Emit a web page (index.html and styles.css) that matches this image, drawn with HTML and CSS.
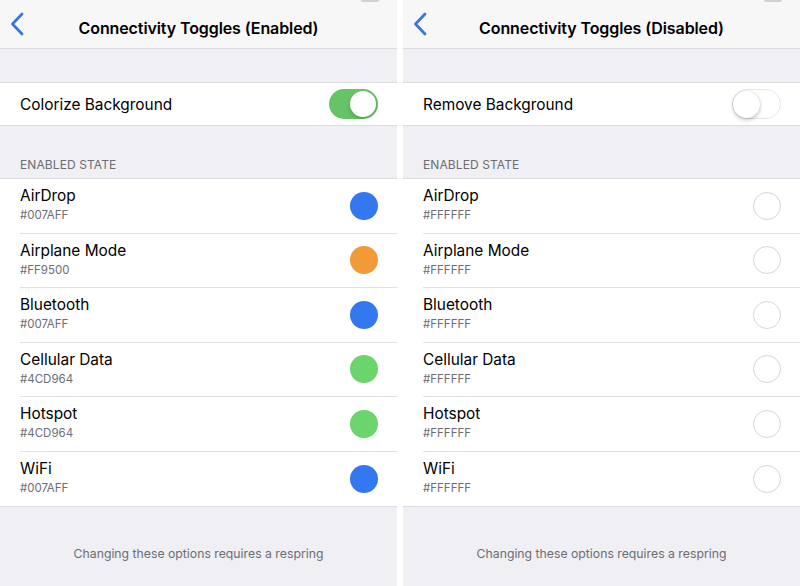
FILE: index.html
```html
<!DOCTYPE html>
<html>
<head>
<meta charset="utf-8">
<link rel="stylesheet" href="styles.css">
</head>
<body>
<div class="phone">
  <div class="nav">
    <svg class="back" width="14" height="24" viewBox="0 0 14 24"><path d="M12 2 L2.5 12 L12 22" fill="none" stroke="#3a7ad6" stroke-width="2.8" stroke-linecap="round" stroke-linejoin="round"/></svg>
    <div class="title">Connectivity Toggles (Enabled)</div>
    <div class="status-mark"></div>
  </div>
  <div class="spacer"></div>
  <div class="switch-row">
    <span class="label">Colorize Background</span>
    <span class="switch on"><span class="knob"></span></span>
  </div>
  <div class="section-head">ENABLED STATE</div>
  <div class="list">
    <div class="row"><div class="text"><div class="name">AirDrop</div><div class="hex">#007AFF</div></div><span class="dot blue"></span></div>
    <div class="row"><div class="text"><div class="name">Airplane Mode</div><div class="hex">#FF9500</div></div><span class="dot orange"></span></div>
    <div class="row"><div class="text"><div class="name">Bluetooth</div><div class="hex">#007AFF</div></div><span class="dot blue"></span></div>
    <div class="row"><div class="text"><div class="name">Cellular Data</div><div class="hex">#4CD964</div></div><span class="dot green"></span></div>
    <div class="row"><div class="text"><div class="name">Hotspot</div><div class="hex">#4CD964</div></div><span class="dot green"></span></div>
    <div class="row"><div class="text"><div class="name">WiFi</div><div class="hex">#007AFF</div></div><span class="dot blue"></span></div>
  </div>
  <div class="footer">Changing these options requires a respring</div>
</div>
<div class="phone">
  <div class="nav">
    <svg class="back" width="14" height="24" viewBox="0 0 14 24"><path d="M12 2 L2.5 12 L12 22" fill="none" stroke="#3a7ad6" stroke-width="2.8" stroke-linecap="round" stroke-linejoin="round"/></svg>
    <div class="title">Connectivity Toggles (Disabled)</div>
    <div class="status-mark"></div>
  </div>
  <div class="spacer"></div>
  <div class="switch-row">
    <span class="label">Remove Background</span>
    <span class="switch off"><span class="knob"></span></span>
  </div>
  <div class="section-head">ENABLED STATE</div>
  <div class="list">
    <div class="row"><div class="text"><div class="name">AirDrop</div><div class="hex">#FFFFFF</div></div><span class="dot white"></span></div>
    <div class="row"><div class="text"><div class="name">Airplane Mode</div><div class="hex">#FFFFFF</div></div><span class="dot white"></span></div>
    <div class="row"><div class="text"><div class="name">Bluetooth</div><div class="hex">#FFFFFF</div></div><span class="dot white"></span></div>
    <div class="row"><div class="text"><div class="name">Cellular Data</div><div class="hex">#FFFFFF</div></div><span class="dot white"></span></div>
    <div class="row"><div class="text"><div class="name">Hotspot</div><div class="hex">#FFFFFF</div></div><span class="dot white"></span></div>
    <div class="row"><div class="text"><div class="name">WiFi</div><div class="hex">#FFFFFF</div></div><span class="dot white"></span></div>
  </div>
  <div class="footer">Changing these options requires a respring</div>
</div>
</body>
</html>
```
FILE: styles.css
```css
html, body {
  margin: 0;
  padding: 0;
  background: #ffffff;
}
body {
  display: flex;
  gap: 6px;
  width: 800px;
  height: 586px;
  overflow: hidden;
  font-family: "Inter", "Liberation Sans", sans-serif;
  color: #000;
}
.phone {
  width: 397px;
  height: 586px;
  background: #efeff4;
  display: flex;
  flex-direction: column;
}
.nav {
  height: 48px;
  background: #f7f7f8;
  border-bottom: 1px solid #dcdce0;
  display: grid;
  grid-template-columns: 40px 1fr 40px;
  align-items: center;
  position: relative;
}
.back {
  margin-left: 10px;
}
.title {
  text-align: center;
  font-size: 16px;
  font-weight: 600;
  letter-spacing: -0.1px;
  padding-top: 8px;
}
.status-mark {
  position: absolute;
  top: 0;
  right: 18px;
  width: 18px;
  height: 2px;
  background: #d0d0d4;
  border-radius: 0 0 2px 2px;
}
.spacer {
  height: 33px;
}
.switch-row {
  height: 42px;
  background: #fff;
  border-top: 1px solid #dcdce0;
  border-bottom: 1px solid #dcdce0;
  display: flex;
  align-items: center;
  justify-content: space-between;
  padding: 0 19px 0 20px;
}
.label {
  font-size: 15.4px;
}
.switch {
  width: 49px;
  height: 30px;
  border-radius: 15px;
  display: flex;
  align-items: center;
  box-sizing: border-box;
  padding: 2px;
}
.switch.on {
  background: #65c466;
  justify-content: flex-end;
}
.switch.off {
  background: #fff;
  border: 1.5px solid #e4e4e8;
  justify-content: flex-start;
  padding: 0;
}
.knob {
  width: 26px;
  height: 26px;
  border-radius: 50%;
  background: #fff;
  box-shadow: 0 2px 4px rgba(0,0,0,0.2);
}
.switch.off .knob {
  width: 27px;
  height: 27px;
  box-shadow: 0 2px 4px rgba(0,0,0,0.22), 0 0 0 0.5px rgba(0,0,0,0.08);
}
.section-head {
  height: 52px;
  box-sizing: border-box;
  display: flex;
  align-items: flex-end;
  padding: 0 0 6px 20px;
  font-size: 12px;
  color: #6d6d72;
  letter-spacing: 0.1px;
}
.list {
  background: #fff;
  border-top: 1px solid #dcdce0;
  border-bottom: 1px solid #dcdce0;
}
.row {
  height: 54.5px;
  box-sizing: border-box;
  display: flex;
  align-items: center;
  justify-content: space-between;
  padding-right: 19px;
  margin-left: 20px;
  border-bottom: 1px solid #e2e2e6;
}
.row:last-child {
  border-bottom: none;
}
.text {
  display: flex;
  flex-direction: column;
  gap: 3px;
  padding-bottom: 3px;
}
.name {
  font-size: 15.4px;
  line-height: 19px;
}
.hex {
  font-size: 11.5px;
  color: #6d6d72;
  line-height: 14px;
}
.dot {
  width: 28px;
  height: 28px;
  border-radius: 50%;
  box-sizing: border-box;
}
.dot.blue { background: #3478f0; }
.dot.orange { background: #f19a37; }
.dot.green { background: #6bd46c; }
.dot.white { background: #fff; border: 1px solid #d6d6da; }
.footer {
  flex: 1;
  text-align: center;
  font-size: 12.25px;
  color: #6d6d72;
  padding-top: 39px;
  box-sizing: border-box;
}
```
